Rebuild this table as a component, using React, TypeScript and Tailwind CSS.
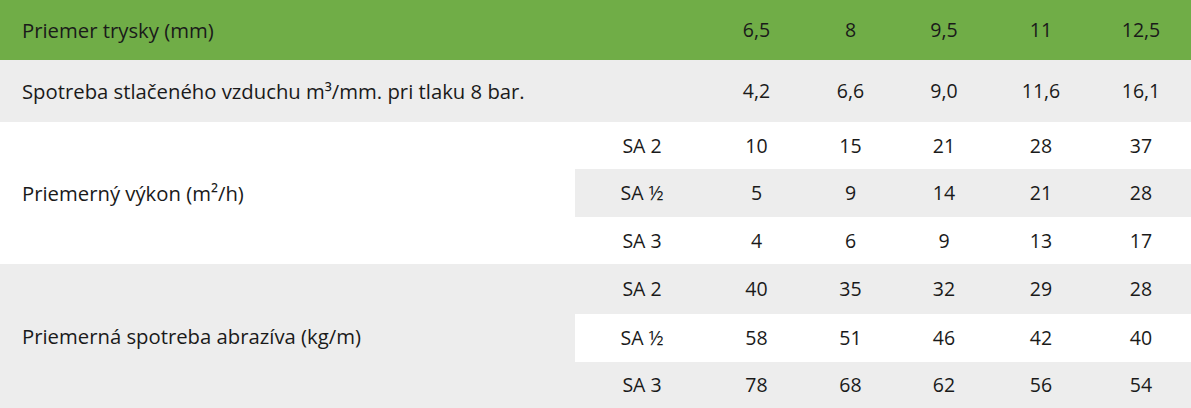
const cols = "grid grid-cols-[134px_95px_93px_94px_100px_100px] text-[19.5px]";

const head = ["6,5", "8", "9,5", "11", "12,5"];
const air = ["4,2", "6,6", "9,0", "11,6", "16,1"];

const groups = [
  {
    label: "Priemerný výkon (m²/h)",
    labelBg: "bg-white",
    rows: [
      { sa: "SA 2", v: ["10", "15", "21", "28", "37"], bg: "bg-white", h: "h-[47px]" },
      { sa: "SA ½", v: ["5", "9", "14", "21", "28"], bg: "bg-[#ededed]", h: "h-[48px]" },
      { sa: "SA 3", v: ["4", "6", "9", "13", "17"], bg: "bg-white", h: "h-[47px]" },
    ],
  },
  {
    label: "Priemerná spotreba abrazíva (kg/m)",
    labelBg: "bg-[#ededed]",
    rows: [
      { sa: "SA 2", v: ["40", "35", "32", "29", "28"], bg: "bg-[#ededed]", h: "h-[50px]" },
      { sa: "SA ½", v: ["58", "51", "46", "42", "40"], bg: "bg-white", h: "h-[48px]" },
      { sa: "SA 3", v: ["78", "68", "62", "56", "54"], bg: "bg-[#ededed]", h: "h-[46px]" },
    ],
  },
];

export default function App() {
  return (
    <div
      className="w-[1191px] h-[408px] bg-white text-[#1a1a1a] text-[20.3px] overflow-hidden"
      style={{ fontFamily: "'Open Sans', sans-serif" }}
    >
      <div className="flex h-[60px] items-center bg-[#70ad47]">
        <div className="w-[575px] pl-[22px]">Priemer trysky (mm)</div>
        <div className={cols}>
          <div />
          {head.map((h) => (
            <div key={h} className="text-center">{h}</div>
          ))}
        </div>
      </div>
      <div className="flex h-[62px] items-center bg-[#ededed]">
        <div className="w-[575px] pl-[22px]">Spotreba stlačeného vzduchu m³/mm. pri tlaku 8 bar.</div>
        <div className={cols}>
          <div />
          {air.map((a) => (
            <div key={a} className="text-center">{a}</div>
          ))}
        </div>
      </div>
      {groups.map((g) => (
        <div key={g.label} className="flex">
          <div className={`w-[575px] pl-[22px] flex items-center ${g.labelBg}`}>{g.label}</div>
          <div className="flex flex-col">
            {g.rows.map((r) => (
              <div key={r.sa} className={`${cols} ${r.h} items-center ${r.bg}`}>
                <div className="text-center">{r.sa}</div>
                {r.v.map((x, i) => (
                  <div key={i} className="text-center">{x}</div>
                ))}
              </div>
            ))}
          </div>
        </div>
      ))}
    </div>
  );
}
